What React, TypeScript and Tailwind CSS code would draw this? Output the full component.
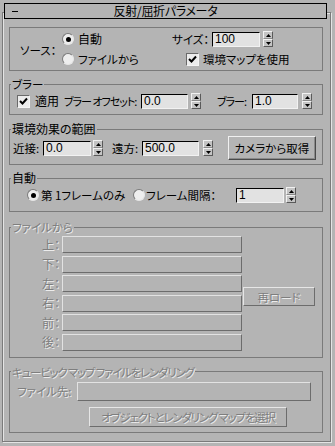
import React from "react";

const Radio = ({ checked = false, disabled = false }: { checked?: boolean; disabled?: boolean }) => (
  <div
    className={
      "w-[12px] h-[12px] shrink-0 rounded-full border border-t-[#7a7a7a] border-l-[#7a7a7a] border-r-[#e6e6e6] border-b-[#e6e6e6] flex items-center justify-center " +
      (disabled ? "bg-[#d0d0d0]" : "bg-[#eeeeee]")
    }
  >
    {checked && <div className="w-[5px] h-[5px] rounded-full bg-black" />}
  </div>
);

const Check = ({ checked = true }: { checked?: boolean }) => (
  <div className="w-[13px] h-[13px] shrink-0 bg-[#ececec] border border-t-[#6a6a6a] border-l-[#6a6a6a] border-r-[#f4f4f4] border-b-[#f4f4f4] flex items-center justify-center">
    {checked && (
      <svg width="9" height="9" viewBox="0 0 9 9">
        <path d="M1 4 L3.5 6.5 L8 1.5" stroke="#000" strokeWidth="2" fill="none" />
      </svg>
    )}
  </div>
);

const Input = ({ w, h = "h-[15px]", children }: { w: string; h?: string; children?: React.ReactNode }) => (
  <div
    className={
      w +
      " " +
      h +
      " shrink-0 bg-[#e2e2e2] border border-t-black border-l-black border-r-[#f2f2f2] border-b-[#f2f2f2] pl-[2px] flex items-center text-[12px] leading-[13px] font-['Liberation_Sans','Noto_Sans_CJK_JP',sans-serif]"
    }
  >
    {children}
  </div>
);

const Spinner = ({ ml }: { ml: string }) => (
  <div className={ml + " w-[10px] h-[16px] shrink-0 flex flex-col"}>
    <div className="h-[8px] flex items-center justify-center bg-[#c4c4c4] border border-t-[#f2f2f2] border-l-[#f2f2f2] border-r-[#5a5a5a] border-b-[#8a8a8a]">
      <svg width="5" height="3" viewBox="0 0 5 3">
        <path d="M2.5 0 L5 3 L0 3Z" fill="#000" />
      </svg>
    </div>
    <div className="h-[8px] flex items-center justify-center bg-[#c4c4c4] border border-t-[#f2f2f2] border-l-[#f2f2f2] border-r-[#5a5a5a] border-b-[#5a5a5a]">
      <svg width="5" height="3" viewBox="0 0 5 3">
        <path d="M0 0 L5 0 L2.5 3Z" fill="#000" />
      </svg>
    </div>
  </div>
);

const DisField = ({ w, h }: { w: string; h: string }) => (
  <div className={w + " " + h + " shrink-0 border border-t-[#e2e2e2] border-l-[#e2e2e2] border-r-[#6c6c6c] border-b-[#6c6c6c]"} />
);

const dis = "text-[#7e7e7e] [text-shadow:1px_1px_0_#ececec]";

export default function App() {
  return (
    <div className="w-[335px] h-[446px] bg-[#b4b4b4] overflow-hidden text-black text-[11.5px] leading-[14px] whitespace-nowrap font-['Noto_Sans_CJK_JP',sans-serif] [font-feature-settings:'palt']">
      {/* title bar */}
      <div className="relative z-10 mt-[3px] ml-[4px] w-[323px] h-[16px] border border-black bg-[#b4b4b4] grid grid-cols-[40px_1fr_40px] items-center">
        <div className="ml-[7px] w-[6px] h-[1px] bg-black" />
        <div className="text-center leading-[14px] text-[12px] tracking-[-0.3px]">反射/屈折パラメータ</div>
        <div />
      </div>

      {/* frame */}
      <div className="-mt-[7px] ml-[2px] w-[329px] h-[430px] border border-[#7a7a7a] shadow-[inset_1px_1px_0_#e4e4e4,1px_1px_0_#e4e4e4] pl-[6px] pt-[14px]">
        {/* G1 */}
        <div className="w-[314px] h-[44px] border border-[#7a7a7a] flex pl-[10px] pt-[1px]">
          <div className="w-[42px] self-center">ソース：</div>
          <div className="w-[110px] flex flex-col">
            <div className="h-[20px] flex items-center gap-[4px]">
              <Radio checked />
              <span className="text-[12px]">自動</span>
            </div>
            <div className="h-[20px] flex items-center gap-[4px]">
              <Radio />
              <span>ファイルから</span>
            </div>
          </div>
          <div className="flex flex-col">
            <div className="h-[20px] flex items-center">
              <span className="w-[40px] shrink-0">サイズ：</span>
              <Input w="w-[48px]">100</Input>
              <Spinner ml="ml-[3px]" />
            </div>
            <div className="h-[20px] flex items-center pl-[14px] gap-[4px]">
              <Check />
              <span>環境マップを使用</span>
            </div>
          </div>
        </div>

        {/* G2 ブラー */}
        <fieldset className="mt-[6px] w-[314px] border border-[#7a7a7a] pb-[3px]">
          <legend className="ml-[1px] px-[1px] leading-[14px]">ブラー</legend>
          <div className="h-[20px] flex items-center pl-[7px]">
            <Check />
            <span className="ml-[5px] w-[29px] shrink-0 text-[12px]">適用</span>
            <span className="w-[77px] shrink-0 text-[11px] tracking-[-1px]">ブラー オフセット:</span>
            <Input w="w-[47px]">0.0</Input>
            <Spinner ml="ml-[3px]" />
            <span className="ml-[16px] w-[35px] shrink-0 text-[11px] tracking-[-1px]">ブラー:</span>
            <Input w="w-[46px]">1.0</Input>
            <Spinner ml="ml-[4px]" />
          </div>
        </fieldset>

        {/* G3 環境効果の範囲 */}
        <fieldset className="mt-[7px] w-[314px] border border-[#7a7a7a] pb-[4px]">
          <legend className="ml-[1px] px-[1px] leading-[14px] text-[12px]">環境効果の範囲</legend>
          <div className="h-[24px] flex items-center pl-[3px]">
            <span className="w-[30px] shrink-0">近接:</span>
            <Input w="w-[48px]">0.0</Input>
            <Spinner ml="ml-[2px]" />
            <span className="ml-[9px] w-[30px] shrink-0">遠方:</span>
            <Input w="w-[57px]">500.0</Input>
            <Spinner ml="ml-[4px]" />
            <div className="ml-[15px] w-[88px] h-[24px] shrink-0 flex items-center justify-center border border-t-[#f0f0f0] border-l-[#f0f0f0] border-r-[#4a4a4a] border-b-[#4a4a4a] shadow-[inset_-1px_-1px_0_#8a8a8a]">
              カメラから取得
            </div>
          </div>
        </fieldset>

        {/* G4 自動 */}
        <fieldset className="mt-[6px] w-[314px] border border-[#7a7a7a] pb-[6px]">
          <legend className="ml-[1px] px-[1px] leading-[14px] text-[12px]">自動</legend>
          <div className="h-[20px] flex items-center pl-[17px]">
            <Radio checked />
            <span className="ml-[2px] w-[92px] shrink-0">第 1フレームのみ</span>
            <Radio />
            <span className="ml-[1px] w-[90px] shrink-0">フレーム間隔：</span>
            <Input w="w-[48px]">1</Input>
            <Spinner ml="ml-[2px]" />
          </div>
        </fieldset>

        {/* G5 ファイルから */}
        <fieldset className="mt-[8px] w-[314px] border border-[#7a7a7a] pb-[6px]">
          <legend className={"ml-[1px] px-[1px] leading-[14px] " + dis}>ファイルから</legend>
          <div className="flex pt-[2px]">
            <div className="flex flex-col gap-[2.6px]">
              {["上", "下", "左", "右", "前", "後"].map((l) => (
                <div key={l} className="h-[17px] flex items-center">
                  <span className={"w-[50px] text-right text-[12px] " + dis}>{l}：</span>
                  <div className="ml-[2px]">
                    <DisField w="w-[180px]" h="h-[17px]" />
                  </div>
                </div>
              ))}
            </div>
            <div
              className={
                "ml-[1px] mt-[51px] w-[72px] h-[19px] flex items-center justify-center border border-t-[#e6e6e6] border-l-[#e6e6e6] border-r-[#6c6c6c] border-b-[#6c6c6c] " +
                dis
              }
            >
              再ロード
            </div>
          </div>
        </fieldset>

        {/* G6 キュービック */}
        <fieldset className="mt-[7px] w-[314px] border border-[#7a7a7a] pb-[5px]">
          <legend className={"ml-[1px] px-[1px] leading-[14px] tracking-[-1.2px] " + dis}>
            キュービック マップ ファイルをレンダリング
          </legend>
          <div className="pt-[3px] flex items-center pl-[7px]">
            <span className={"w-[60px] shrink-0 " + dis}>ファイル先:</span>
            <DisField w="w-[234px]" h="h-[19px]" />
          </div>
          <div
            className={
              "mt-[6px] ml-[79px] w-[198px] h-[20px] flex items-center justify-center border border-t-[#e6e6e6] border-l-[#e6e6e6] border-r-[#6c6c6c] border-b-[#6c6c6c] tracking-[-1.2px] " +
              dis
            }
          >
            オブジェクトとレンダリング マップを選択
          </div>
        </fieldset>
      </div>
    </div>
  );
}
